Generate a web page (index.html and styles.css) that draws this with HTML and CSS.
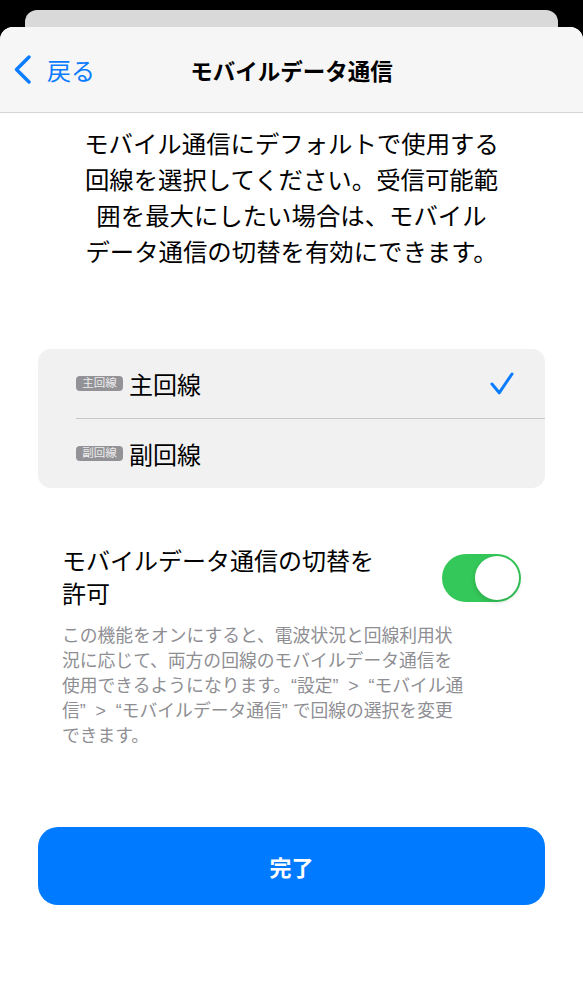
FILE: index.html
```html
<!DOCTYPE html>
<html lang="ja">
<head>
    <meta charset="UTF-8">
    <meta name="viewport" content="width=device-width, initial-scale=1.0">
    <title>モバイルデータ通信</title>
    <link rel="stylesheet" href="styles.css">
</head>
<body>
    <div class="back-card"></div>
    <div class="sheet">
        <div class="nav">
            <a class="nav-back" href="#">
                <svg width="20" height="30" viewBox="0 0 20 30">
                    <path d="M16 2 L3.5 14.5 L16 27" fill="none" stroke="#0a7cff" stroke-width="3.4" stroke-linecap="round" stroke-linejoin="round"/>
                </svg>
                <span>戻る</span>
            </a>
            <h1 class="nav-title">モバイルデータ通信</h1>
            <div></div>
        </div>

        <p class="intro">
            モバイル通信にデフォルトで使用する<br>
            回線を選択してください。受信可能範<br>
            囲を最大にしたい場合は、モバイル<br>
            データ通信の切替を有効にできます。
        </p>

        <div class="lines">
            <div class="line-row">
                <span class="badge">主回線</span>
                <span class="line-name">主回線</span>
                <svg class="check" width="24" height="23" viewBox="0 0 24 23">
                    <path d="M2 12 L9.2 20.8 L22 2" fill="none" stroke="#0a7cff" stroke-width="3" stroke-linecap="round" stroke-linejoin="round"/>
                </svg>
            </div>
            <div class="divider"></div>
            <div class="line-row">
                <span class="badge">副回線</span>
                <span class="line-name">副回線</span>
            </div>
        </div>

        <div class="switch-row">
            <div class="switch-label">モバイルデータ通信の切替を<br>許可</div>
            <div class="switch on"><div class="knob"></div></div>
        </div>

        <p class="note">
            この機能をオンにすると、電波状況と回線利用状<br>
            況に応じて、両方の回線のモバイルデータ通信を<br>
            使用できるようになります。“設定”&nbsp; &gt; &nbsp;“モバイル通<br>
            信”&nbsp; &gt; &nbsp;“モバイルデータ通信” で回線の選択を変更<br>
            できます。
        </p>

        <button class="done">完了</button>
    </div>
</body>
</html>
```

FILE: styles.css
```css
body {
    margin: 0;
    padding: 0;
    background-color: #000;
    font-family: "Liberation Sans", "Noto Sans CJK JP", sans-serif;
    color: #000;
}
.back-card {
    margin: 10px 25px 0 25px;
    height: 17px;
    background-color: #d9d9d9;
    border-radius: 12px 12px 0 0;
}
.sheet {
    background-color: #fff;
    border-radius: 13px 13px 0 0;
    min-height: 973px;
    overflow: hidden;
}
.nav {
    height: 85px;
    background-color: #f6f6f6;
    border-bottom: 1px solid #d4d4d4;
    display: grid;
    grid-template-columns: 1fr auto 1fr;
    align-items: center;
}
.nav-back {
    display: flex;
    align-items: center;
    gap: 14px;
    padding-left: 13px;
    color: #0a7cff;
    text-decoration: none;
    font-size: 24px;
}
.nav-back svg {
    display: block;
}
.nav-title {
    margin: 0;
    font-size: 22.5px;
    font-weight: bold;
}
.intro {
    margin: 14px 0 0 0;
    text-align: center;
    font-size: 24.4px;
    line-height: 36px;
    white-space: nowrap;
}
.lines {
    margin: 78px 38px 0 38px;
    background-color: #f1f1f1;
    border-radius: 13px;
}
.line-row {
    height: 69px;
    display: flex;
    align-items: center;
    padding: 0 31px 0 38px;
}
.badge {
    width: 47px;
    height: 15px;
    line-height: 15px;
    background-color: #929297;
    color: #ededed;
    font-size: 11.5px;
    text-align: center;
    border-radius: 4px;
    margin-right: 6px;
}
.line-name {
    font-size: 24px;
}
.check {
    margin-left: auto;
}
.divider {
    margin-left: 38px;
    height: 1px;
    background-color: #c8c8c8;
}
.switch-row {
    margin: 57px 62px 0 62px;
    display: flex;
    align-items: center;
    justify-content: space-between;
}
.switch-label {
    font-size: 24px;
    line-height: 33px;
}
.switch {
    width: 79px;
    height: 48px;
    border-radius: 24px;
    background-color: #34c759;
    position: relative;
}
.knob {
    position: absolute;
    top: 2px;
    right: 2px;
    width: 44px;
    height: 44px;
    border-radius: 50%;
    background-color: #fff;
    box-shadow: 0 2px 5px rgba(0, 0, 0, 0.15);
}
.note {
    margin: 13px 62px 0 62px;
    font-size: 17.8px;
    line-height: 25px;
    color: #8e8e93;
    white-space: nowrap;
}
.done {
    display: block;
    margin: 78px 38px 0 38px;
    width: 507px;
    height: 78px;
    border: none;
    border-radius: 20px;
    background-color: #007aff;
    color: #fff;
    font-family: "Liberation Sans", "Noto Sans CJK JP", sans-serif;
    font-size: 22px;
    font-weight: bold;
    cursor: pointer;
}
```
